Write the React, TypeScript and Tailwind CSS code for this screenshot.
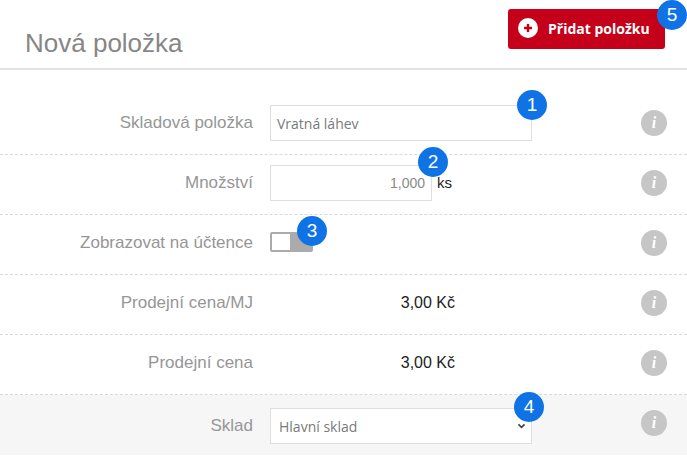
import React from 'react';

const Badge = ({ n, className }: { n: number; className: string }) => (
  <span className={`absolute w-[30px] h-[30px] rounded-full bg-[#0f73e6] text-white text-[19px] leading-[30px] text-center font-['Liberation_Sans',sans-serif] ${className}`}>
    {n}
  </span>
);

const Info = ({ className = '' }: { className?: string }) => (
  <span className={`w-[26px] h-[26px] rounded-full bg-[#c6c6c6] text-white flex items-center justify-center font-['Liberation_Serif',serif] font-bold italic text-[16px] leading-none ${className}`}>
    i
  </span>
);

const Row = ({ label, children, last }: { label: string; children?: React.ReactNode; last?: boolean }) => (
  <div className={`flex items-center h-[60px] ${last ? 'bg-[#f6f6f6] pt-[2px]' : 'pb-[3px] border-b border-dashed border-[#d9d9d9]'}`}>
    <div className="w-[253px] text-right text-[17px] text-[#969696]">{label}</div>
    <div className="relative ml-[17px] w-[371px] flex items-center">{children}</div>
    <Info className={last ? 'mb-[6px]' : ''} />
  </div>
);

const Price = () => (
  <div className="w-[185px] text-right text-[16px] text-[#222]">3,00 Kč</div>
);

export default function App() {
  return (
    <div className="w-[687px] h-[462px] bg-white overflow-hidden font-['Liberation_Sans',Arial,sans-serif]">
      <div className="relative h-[70px] border-b-2 border-[#e2e2e2] pl-[25px] pt-[27px]">
        <h1 className="text-[26px] leading-[32px] text-[#868686]">Nová položka</h1>
        <button className="absolute left-[508px] top-[9px] w-[157px] h-[40px] pb-[2px] rounded-[3px] bg-[#c4001a] text-white flex items-center pl-[10px] gap-[10px] text-[14px] font-bold font-['Open_Sans',sans-serif]">
          <span className="w-[20px] h-[20px] rounded-full bg-white flex items-center justify-center">
            <svg width="10" height="10" viewBox="0 0 10 10" fill="#c4001a">
              <path d="M3.8 1h2.4v2.8H9v2.4H6.2V9H3.8V6.2H1V3.8h2.8z" />
            </svg>
          </span>
          Přidat položku
        </button>
        <Badge n={5} className="left-[657px] top-0" />
      </div>

      <div className="pt-[25px]">
        <Row label="Skladová položka">
          <div className="w-[262px] h-[36px] border border-[#dedede] bg-white pl-[6px] flex items-center text-[14px] text-[#7a7a7a] font-['Open_Sans',sans-serif]">
            Vratná láhev
          </div>
          <Badge n={1} className="left-[247px] top-[-15px]" />
        </Row>
        <Row label="Množství">
          <div className="w-[162px] h-[36px] border border-[#dedede] bg-white pr-[6px] flex items-center justify-end text-[14px] text-[#8a8a8a]">
            1,000
          </div>
          <span className="ml-[5px] text-[15px] text-[#222]">ks</span>
          <Badge n={2} className="left-[148px] top-[-18px]" />
        </Row>
        <Row label="Zobrazovat na účtence">
          <div className="w-[43px] h-[20px] mb-[2px] rounded-[2px] bg-[#ababab] border-[2px] border-[#ababab] flex">
            <span className="w-[18px] h-[16px] bg-white" />
          </div>
          <Badge n={3} className="left-[27px] top-[-16px]" />
        </Row>
        <Row label="Prodejní cena/MJ">
          <Price />
        </Row>
        <Row label="Prodejní cena">
          <Price />
        </Row>
        <Row label="Sklad" last>
          <div className="w-[262px] h-[36px] border border-[#dedede] bg-white pl-[8px] pr-[5px] flex items-center justify-between text-[14px] text-[#7a7a7a] font-['Open_Sans',sans-serif]">
            Hlavní sklad
            <svg width="9" height="6" viewBox="0 0 10 7" fill="none" stroke="#444" strokeWidth="2">
              <path d="M1.5 1.5 5 5l3.5-3.5" />
            </svg>
          </div>
          <Badge n={4} className="left-[244px] top-[-16px]" />
        </Row>
      </div>
    </div>
  );
}
